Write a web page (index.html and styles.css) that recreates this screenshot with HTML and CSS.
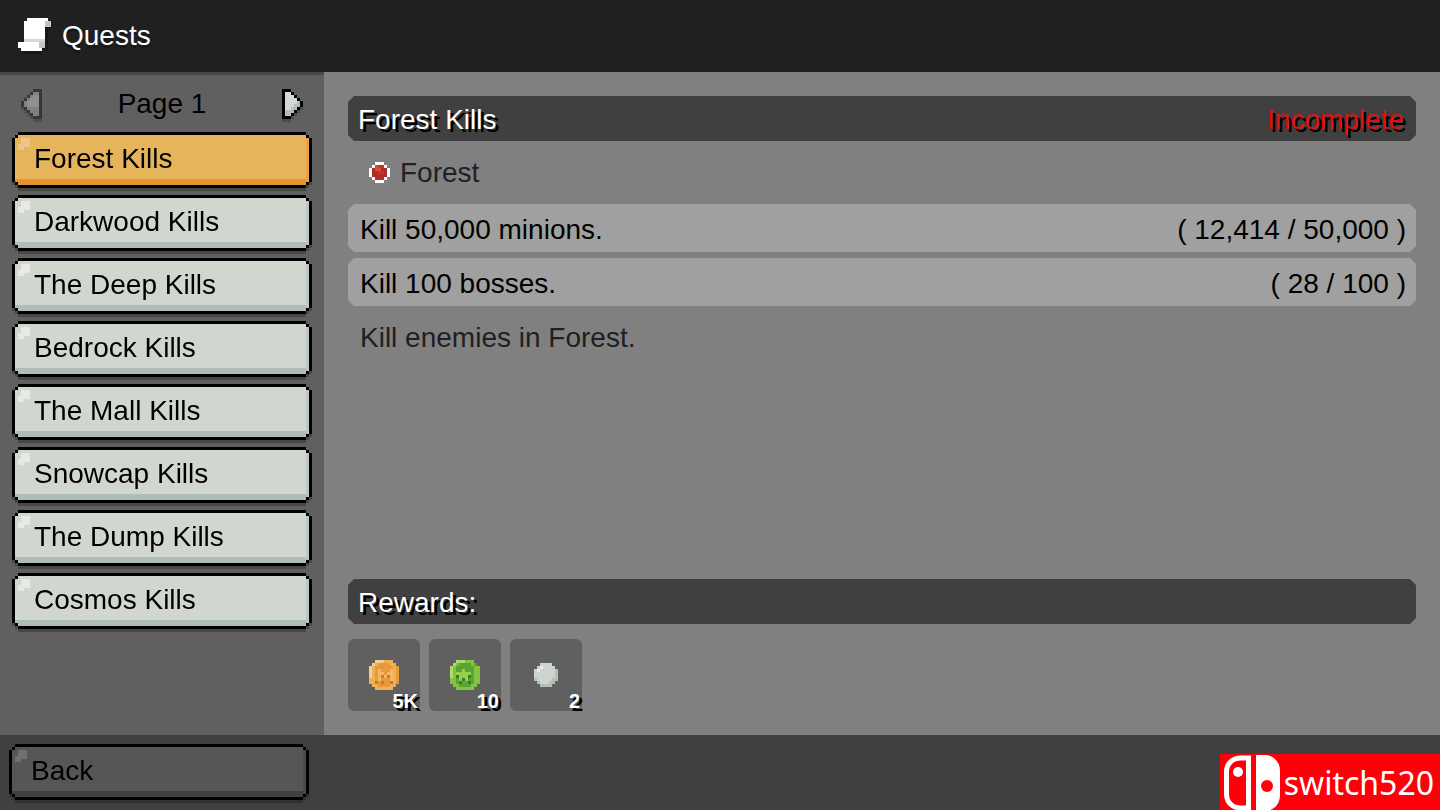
FILE: index.html
```html
<!DOCTYPE html>
<html lang="en">
<head>
<meta charset="utf-8">
<title>Quests</title>
<link rel="stylesheet" href="styles.css">
</head>
<body>
<div class="screen">
  <header class="header">
    <svg class="scroll-icon" viewBox="0 0 12 12" shape-rendering="crispEdges" aria-hidden="true">
      <path fill="#181818" d="M9 3h2v1h-1v7H8v1H1v-1h7V4h1z"/>
      <path fill="#fff" d="M3 0h7v1H9v9H8v1H1v-1H0V8h2V1h1z"/>
      <path fill="#c3c6c6" d="M9 1h2v2H9zM7 8h2v2H7z"/>
      <path fill="#d6d8d8" d="M2 7h7v1H2z"/>
    </svg>
    <h1 class="header-title">Quests</h1>
  </header>

  <nav class="sidebar" aria-label="Quest list">
    <div class="pager">
      <button class="arrow arrow-off" aria-label="Previous page" disabled>
        <svg viewBox="0 0 7 10" shape-rendering="crispEdges">
          <path fill="#303030" d="M4 0h3v10H4V9H3V8H2V7H1V6H0V4h1V3h1V2h1V1h1z"/>
          <path fill="#858987" d="M4 1h2v8H4V8H3V7H2V6H1V4h1V3h1V2h1z"/>
          <path fill="#969a98" d="M4 2h2v4H2V4h1V3h1z"/>
        </svg>
      </button>
      <span class="page-label">Page 1</span>
      <button class="arrow" aria-label="Next page">
        <svg viewBox="0 0 7 10" shape-rendering="crispEdges">
          <path fill="#000" d="M0 0h3v1h1v1h1v1h1v1h1v2H6v1H5v1H4v1H3v1H0z"/>
          <path fill="#b4bdb8" d="M1 1h2v1h1v1h1v1h1v2H5v1H4v1H3v1H1z"/>
          <path fill="#d5d9d3" d="M1 1h2v1h1v1h1v2H4v1H3v1H1z"/>
        </svg>
      </button>
    </div>
    <ul class="quest-list">
      <li><button class="btn btn-selected" aria-current="true">Forest Kills</button></li>
      <li><button class="btn">Darkwood Kills</button></li>
      <li><button class="btn">The Deep Kills</button></li>
      <li><button class="btn">Bedrock Kills</button></li>
      <li><button class="btn">The Mall Kills</button></li>
      <li><button class="btn">Snowcap Kills</button></li>
      <li><button class="btn">The Dump Kills</button></li>
      <li><button class="btn">Cosmos Kills</button></li>
    </ul>
  </nav>

  <main class="detail">
    <div class="bar">
      <h2 class="bar-title">Forest Kills</h2>
      <span class="status">Incomplete</span>
    </div>
    <div class="location">
      <svg class="dot" viewBox="0 0 7 7" shape-rendering="crispEdges" aria-hidden="true">
        <path fill="#fff" d="M2 0h3v1h1v1h1v3H6v1H5v1H2V6H1V5H0V2h1V1h1z"/>
        <path fill="#b02c26" d="M2 1h3v1h1v3H5v1H2V5H1V2h1z"/>
        <path fill="#d0503f" d="M2 1h1v1h1v1H2z"/>
        <path fill="#c0352c" d="M3 1h2v1H4v1h1v1H3V3h1V2H3z"/>
      </svg>
      <span>Forest</span>
    </div>
    <ul class="goals">
      <li class="goal"><span>Kill 50,000 minions.</span><span>( 12,414 / 50,000 )</span></li>
      <li class="goal"><span>Kill 100 bosses.</span><span>( 28 / 100 )</span></li>
    </ul>
    <p class="description">Kill enemies in Forest.</p>

    <div class="bar rewards-bar">
      <h2 class="bar-title">Rewards:</h2>
    </div>
    <ul class="rewards">
      <li class="reward">
        <svg class="coin" viewBox="0 0 10 10" shape-rendering="crispEdges" aria-hidden="true">
          <path fill="#eeb056" d="M2 0h6v1h1v1h1v6H9v1H8v1H2V9H1V8H0V2h1V1h1z"/>
          <path fill="#e8993c" d="M3 1h4v1h1v6H7v1H3V8H2V2h1zM9 2h1v6H9z"/>
          <path fill="#f5cf94" d="M2 0h3v1H2v1H1v4H0V2h1V1h1z"/>
          <path fill="#f1b866" d="M3 3h1v1h1v1h1V4h1V3h1v4H7V6H4v1H3z"/>
          <path fill="#c27a2c" d="M4 5h1v1H4zM6 5h1v1H6zM2 7h1v1H2zM4 7h1v1H4zM7 7h1v1H7z"/>
        </svg>
        <span class="count">5K</span>
      </li>
      <li class="reward">
        <svg class="coin" viewBox="0 0 10 10" shape-rendering="crispEdges" aria-hidden="true">
          <path fill="#84c342" d="M2 0h6v1h1v1h1v6H9v1H8v1H2V9H1V8H0V2h1V1h1z"/>
          <path fill="#59a432" d="M3 1h4v1h1v6H7v1H3V8H2V2h1zM8 1h1v1H8z"/>
          <path fill="#aeda72" d="M2 0h3v1H2v1H1v4H0V2h1V1h1z"/>
          <path fill="#93d04c" d="M4 3h1v1h2v1H6v2H5V6H4v1H3V5H2V4h2z"/>
          <path fill="#3a7a28" d="M2 5h1v1H2zM6 5h1v1H6zM4 6h1v1H4zM3 7h1v1H3zM6 7h1v1H6z"/>
        </svg>
        <span class="count">10</span>
      </li>
      <li class="reward">
        <svg class="orb" viewBox="0 0 8 8" shape-rendering="crispEdges" aria-hidden="true">
          <path fill="#b4bfb9" d="M2 0h4v1h1v1h1v4H7v1H6v1H2V7H1V6H0V2h1V1h1z"/>
          <path fill="#cdd3cd" d="M2 0h4v1h1v4H6v1H5v1H2V6H1V5H0V2h1V1h1z"/>
          <path fill="#e8ebe7" d="M2 1h1v1H2v1H1V2h1z"/>
        </svg>
        <span class="count">2</span>
      </li>
    </ul>
  </main>

  <footer class="footer">
    <div class="back"><button class="btn btn-dark">Back</button></div>
  </footer>
</div>

<div class="watermark">
  <svg class="joycons" viewBox="0 0 56 56" aria-hidden="true">
    <path fill="none" stroke="#fff" stroke-width="5" d="M24.500 3H17C8 3 2.500 9 2.500 17v22c0 8 5.500 14 14.500 14h7.500z"/>
    <circle cx="14" cy="17" r="5" fill="#fff"/>
    <path fill="#fff" d="M32 0h8c10 0 16 7 16 16v24c0 9-6 16-16 16h-8z"/>
    <circle cx="43" cy="31" r="6" fill="#ff000a"/>
  </svg>
  <span>switch520</span>
</div>
</body>
</html>
```

FILE: styles.css
```css
* {
  box-sizing: border-box;
}

body {
  margin: 0;
  background: #808080;
  color: #000;
  font-family: "Liberation Sans", Arial, sans-serif;
  font-size: 28px;
  line-height: 32px;
}

h1, h2, p, ul {
  margin: 0;
  padding: 0;
  font-size: inherit;
  font-weight: normal;
  list-style: none;
}

button {
  margin: 0;
  padding: 0;
  border: 0;
  background: none;
  color: inherit;
  font: inherit;
  cursor: pointer;
}

svg {
  display: block;
  flex: none;
}

.screen {
  display: grid;
  grid-template-columns: 324px 1fr;
  grid-template-rows: auto 1fr auto;
  min-height: 100vh;
}

/* Header */
.header {
  grid-column: 1 / -1;
  display: flex;
  align-items: center;
  gap: 8px;
  padding: 18px;
  background: #202020;
  color: #fff;
}

.scroll-icon {
  width: 36px;
  height: 36px;
}

.header-title {
  text-shadow: 0 3px 0 #181818;
}

/* Sidebar */
.sidebar {
  padding: 12px;
  border-top: 3px solid #484848;
  background: #606060;
}

.pager {
  display: flex;
  align-items: center;
  justify-content: space-between;
  height: 33px;
  margin-bottom: 12px;
  padding: 0 9px;
}

.arrow svg {
  width: 21px;
  height: 30px;
  filter: drop-shadow(0 3px 0 #4c4c4c);
}

.arrow-off {
  opacity: 0.85;
}

.quest-list {
  display: grid;
  gap: 7px;
}

.quest-list li,
.back {
  height: 56px;
  filter: drop-shadow(0 3px 0 #484848);
}

/* Pixel-cornered button: black outline, flat face, lower lip, glint */
.btn {
  --face: #d1d6cf;
  --lip: #aebdb7;
  --edge: #bdc8c2;
  --glint: #e6e9e6;
  position: relative;
  z-index: 0;
  width: 100%;
  height: 56px;
  padding: 0 22px 3px;
  background: #000;
  text-align: left;
  clip-path: polygon(
    6px 0, calc(100% - 6px) 0, calc(100% - 6px) 3px, calc(100% - 3px) 3px,
    calc(100% - 3px) 6px, 100% 6px, 100% calc(100% - 6px),
    calc(100% - 3px) calc(100% - 6px), calc(100% - 3px) calc(100% - 3px),
    calc(100% - 6px) calc(100% - 3px), calc(100% - 6px) 100%, 6px 100%,
    6px calc(100% - 3px), 3px calc(100% - 3px), 3px calc(100% - 6px),
    0 calc(100% - 6px), 0 6px, 3px 6px, 3px 3px, 6px 3px);
}

.btn::before {
  content: "";
  position: absolute;
  z-index: -1;
  inset: 3px;
  border-right: 3px solid var(--edge);
  border-bottom: 6px solid var(--lip);
  background: var(--face);
  clip-path: polygon(
    3px 0, calc(100% - 3px) 0, calc(100% - 3px) 3px, 100% 3px,
    100% calc(100% - 3px), calc(100% - 3px) calc(100% - 3px),
    calc(100% - 3px) 100%, 3px 100%, 3px calc(100% - 3px),
    0 calc(100% - 3px), 0 3px, 3px 3px);
}

.btn::after {
  content: "";
  position: absolute;
  z-index: -1;
  top: 6px;
  left: 6px;
  width: 12px;
  height: 12px;
  background: var(--glint);
  clip-path: polygon(3px 0, 100% 0, 100% 9px, 6px 9px, 6px 100%, 0 100%, 0 6px, 3px 6px);
}

.btn-selected {
  --face: #e6b45a;
  --lip: #e5932e;
  --edge: #e6a347;
  --glint: #eac68a;
}

.btn-dark {
  --face: #565656;
  --lip: #404040;
  --edge: #4b4b4b;
  --glint: #707070;
}

/* Detail panel */
.detail {
  display: flex;
  flex-direction: column;
  padding: 24px;
}

.bar,
.goal {
  clip-path: polygon(
    6px 0, calc(100% - 6px) 0, calc(100% - 3px) 3px, 100% 6px,
    100% calc(100% - 6px), calc(100% - 3px) calc(100% - 3px),
    calc(100% - 6px) 100%, 6px 100%, 3px calc(100% - 3px),
    0 calc(100% - 6px), 0 6px, 3px 3px);
}

.bar {
  display: flex;
  align-items: center;
  justify-content: space-between;
  height: 45px;
  padding: 2px 12px 0 10px;
  background: #404040;
  color: #fff;
  text-shadow: 3px 3px 0 #000;
}

.status {
  color: #e01010;
}

.location {
  display: flex;
  align-items: center;
  gap: 10px;
  height: 63px;
  padding-left: 21px;
  color: #202020;
}

.dot {
  width: 21px;
  height: 21px;
}

.goals {
  display: grid;
  gap: 6px;
}

.goal {
  display: flex;
  align-items: center;
  justify-content: space-between;
  height: 48px;
  padding: 4px 10px 0 12px;
  background: #a0a0a0;
}

.description {
  padding: 16px 12px;
  color: #202020;
}

.rewards-bar {
  margin-top: auto;
}

.rewards {
  display: flex;
  gap: 9px;
  margin-top: 15px;
}

.reward {
  position: relative;
  display: grid;
  place-items: center;
  width: 72px;
  height: 72px;
  border-radius: 6px;
  background: #606060;
}

.coin {
  width: 30px;
  height: 30px;
}

.orb {
  width: 24px;
  height: 24px;
}

.count {
  position: absolute;
  right: 2px;
  bottom: 0;
  color: #fff;
  font-size: 20px;
  font-weight: bold;
  line-height: 20px;
  text-shadow: 3px 3px 0 #000;
}

/* Footer */
.footer {
  grid-column: 1 / -1;
  padding: 9px 9px 10px;
  background: #404040;
}

.back {
  width: 300px;
  filter: drop-shadow(0 3px 0 #303030);
}

/* Watermark over the corner */
.watermark {
  position: absolute;
  right: 0;
  bottom: 0;
  display: flex;
  align-items: center;
  gap: 4px;
  height: 56px;
  padding: 2px 6px 0 4px;
  background: #ff000a;
  color: #fff;
  font-family: "Noto Sans", "Open Sans", sans-serif;
  font-size: 32px;
}

.joycons {
  width: 56px;
  height: 56px;
}
```
